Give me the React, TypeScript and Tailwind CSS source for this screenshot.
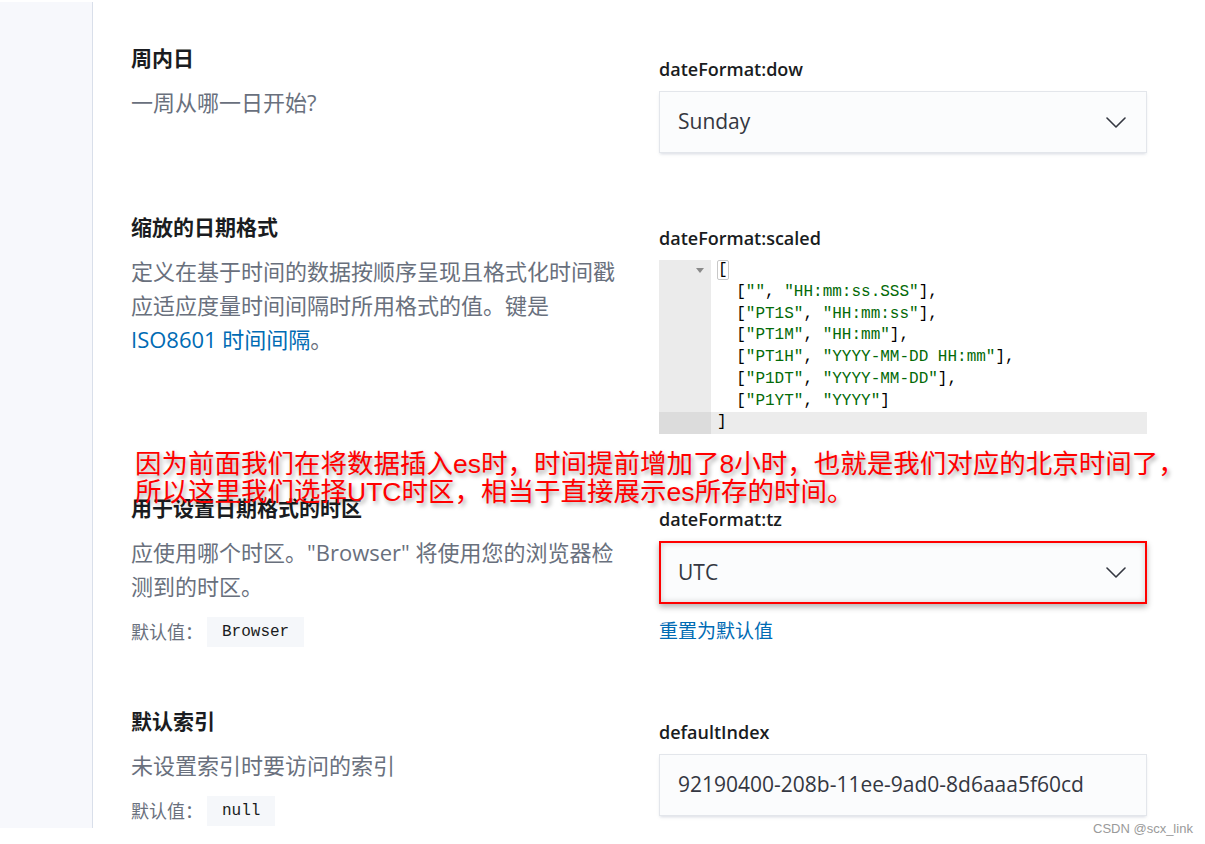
import type { ReactNode } from "react";

type Tok = [string, boolean];

// [text, isString]
const CODE: { indent: number; toks: Tok[] }[] = [
  { indent: 0, toks: [["[", false]] },
  { indent: 2, toks: [["[", false], ['""', true], [", ", false], ['"HH:mm:ss.SSS"', true], ["],", false]] },
  { indent: 2, toks: [["[", false], ['"PT1S"', true], [", ", false], ['"HH:mm:ss"', true], ["],", false]] },
  { indent: 2, toks: [["[", false], ['"PT1M"', true], [", ", false], ['"HH:mm"', true], ["],", false]] },
  { indent: 2, toks: [["[", false], ['"PT1H"', true], [", ", false], ['"YYYY-MM-DD HH:mm"', true], ["],", false]] },
  { indent: 2, toks: [["[", false], ['"P1DT"', true], [", ", false], ['"YYYY-MM-DD"', true], ["],", false]] },
  { indent: 2, toks: [["[", false], ['"P1YT"', true], [", ", false], ['"YYYY"', true], ["]", false]] },
  { indent: 0, toks: [["]", false]] },
];

function Chevron() {
  return (
    <svg width="20" height="11" viewBox="0 0 20 11" fill="none">
      <path d="M1 1l9 9 9-9" stroke="#343741" strokeWidth="1.6" strokeLinecap="round" strokeLinejoin="round" />
    </svg>
  );
}

function Select({ value, marked = false }: { value: string; marked?: boolean }) {
  return (
    <div
      className={
        marked
          ? "flex h-[63px] items-center justify-between border-2 border-[#f00] bg-[#fbfcfd] pl-[17px] pr-[19px] shadow-[0_3px_6px_rgba(0,0,0,0.3),inset_0_0_6px_rgba(0,0,0,0.18)]"
          : "flex h-[62px] items-center justify-between border border-[#e3e6eb] bg-[#fbfcfd] pl-[18px] pr-[20px] shadow-[0_2px_3px_-1px_rgba(152,162,179,0.4)]"
      }
    >
      <span className="text-[21px] text-[#343741]">{value}</span>
      <Chevron />
    </div>
  );
}

function CodeEditor() {
  return (
    <div className="h-[174px] overflow-hidden bg-white font-['Liberation_Mono',monospace] text-[16px]">
      {CODE.map((line, i) => {
        const active = i === CODE.length - 1;
        return (
          <div key={i} className={`flex h-[21.75px] leading-[21.75px] ${active ? "bg-[#ececec]" : ""}`}>
            <div
              className={`flex w-[52px] shrink-0 items-center justify-end pr-[7px] ${active ? "bg-[#dcdcdc]" : "bg-[#ebebeb]"}`}
            >
              {i === 0 && (
                <svg width="8" height="5" viewBox="0 0 8 5">
                  <path d="M0 0h8L4 5z" fill="#8a8a8a" />
                </svg>
              )}
            </div>
            <div className="whitespace-pre pl-[6px]">
              {" ".repeat(line.indent)}
              {line.toks.map(([t, s], j) =>
                i === 0 ? (
                  <span key={j} className="rounded-[2px] border border-[#c8c8c8] text-black">
                    {t}
                  </span>
                ) : (
                  <span key={j} className={s ? "text-[#036a07]" : "text-black"}>
                    {t}
                  </span>
                )
              )}
            </div>
          </div>
        );
      })}
    </div>
  );
}

function DefaultValue({ value }: { value: string }) {
  return (
    <div className="mt-[14px] flex items-center text-[18px] text-[#69707d]">
      <span>默认值：</span>
      <code className="ml-1 flex h-[30px] items-center bg-[#f5f7fa] px-[15px] font-['Liberation_Mono',monospace] text-[16px] text-[#1a1c21]">
        {value}
      </code>
    </div>
  );
}

function Setting({
  title,
  desc,
  def,
  label,
  children,
}: {
  title: string;
  desc: ReactNode;
  def?: string;
  label: string;
  children: ReactNode;
}) {
  return (
    <div className="flex">
      <div className="w-[496px]">
        <h3 className="text-[21px] font-bold leading-6 text-[#1a1c21]">{title}</h3>
        <div className="mt-[15px] text-[22px] leading-[34px] text-[#69707d]">{desc}</div>
        {def && <DefaultValue value={def} />}
      </div>
      <div className="ml-8 w-[488px] pt-[11px]">
        <div className="text-[18px] font-semibold leading-6 text-[#1a1c21]">{label}</div>
        <div className="mt-[10px]">{children}</div>
      </div>
    </div>
  );
}

export default function App() {
  return (
    <div className="relative h-[844px] w-[1205px] overflow-hidden bg-white font-['Open_Sans','Noto_Sans_CJK_SC',sans-serif]">
      <div className="mt-[2px] flex h-[826px]">
        <aside className="w-[93px] shrink-0 border-r border-[#d9dfea] bg-[#f7f8fc]" />
        <main className="flex flex-1 flex-col gap-[62px] pl-[38px] pt-[44px]">
          <Setting title="周内日" desc="一周从哪一日开始?" label="dateFormat:dow">
            <Select value="Sunday" />
          </Setting>

          <Setting
            title="缩放的日期格式"
            desc={
              <>
                定义在基于时间的数据按顺序呈现且格式化时间戳应适应度量时间间隔时所用格式的值。键是
                <span className="text-[#006bb4]">ISO8601 时间间隔</span>。
              </>
            }
            label="dateFormat:scaled"
          >
            <CodeEditor />
          </Setting>

          <Setting
            title="用于设置日期格式的时区"
            desc={'应使用哪个时区。"Browser" 将使用您的浏览器检测到的时区。'}
            def="Browser"
            label="dateFormat:tz"
          >
            <Select value="UTC" marked />
            <div className="mt-[15px] text-[19px] leading-6 text-[#006bb4]">重置为默认值</div>
          </Setting>

          <Setting
            title="默认索引"
            desc="未设置索引时要访问的索引"
            def="null"
            label="defaultIndex"
          >
            <div className="flex h-[62px] items-center border border-[#e3e6eb] bg-[#fbfcfd] pl-[18px] text-[21px] text-[#343741] shadow-[0_2px_3px_-1px_rgba(152,162,179,0.4)]">
              92190400-208b-11ee-9ad0-8d6aaa5f60cd
            </div>
          </Setting>
        </main>
      </div>

      {/* red annotation drawn over the page */}
      <div className="absolute left-[135px] top-[450px] z-10 whitespace-nowrap font-['Liberation_Sans','Noto_Sans_CJK_SC',sans-serif] text-[26.5px] leading-[28px] text-[#f00] [text-shadow:2px_3px_4px_rgba(0,0,0,0.35)]">
        <div>因为前面我们在将数据插入es时，时间提前增加了8小时，也就是我们对应的北京时间了，</div>
        <div>所以这里我们选择UTC时区，相当于直接展示es所存的时间。</div>
      </div>

      <div className="absolute left-[1093px] top-[819px] font-['Liberation_Sans',sans-serif] text-[13px] text-[#9a9a9a]">
        CSDN @scx_link
      </div>
    </div>
  );
}
